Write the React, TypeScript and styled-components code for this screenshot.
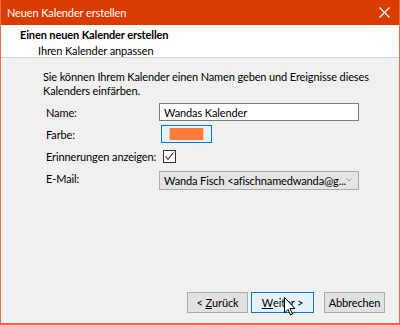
import React from 'react';
import styled, { createGlobalStyle } from 'styled-components';

const GlobalStyle = createGlobalStyle`
  html, body {
    margin: 0;
    padding: 0;
    background: #ffffff;
  }
  body {
    font-family: Lato, "Liberation Sans", sans-serif;
    font-size: 11px;
    letter-spacing: -0.12px;
    color: #000000;
    white-space: nowrap;
  }
`;

const Window = styled.div`
  width: 400px;
  height: 325px;
  box-sizing: border-box;
  display: flex;
  flex-direction: column;
  border: 1px solid #e0714a;
  border-top: none;
  border-bottom-width: 2px;
  background: #f0f0f0;
  overflow: hidden;
`;

const TitleBar = styled.div`
  height: 25px;
  flex: none;
  display: flex;
  align-items: center;
  justify-content: space-between;
  background: #da3b01;
  color: #ffffff;
  padding: 0 8px 0 7px;
  margin: 0 -1px;
`;

const CloseIcon = styled.svg`
  width: 11px;
  height: 11px;
  margin-right: 2px;
`;

const Header = styled.div`
  flex: none;
  height: 33px;
  box-sizing: border-box;
  background: #ffffff;
  padding: 2px 0 0 19px;
  border-bottom: 1px solid #d5d5d5;
`;

const HeaderTitle = styled.div`
  font-weight: 700;
  line-height: 16px;
`;

const HeaderSub = styled.div`
  padding-left: 18px;
  line-height: 15px;
`;

const Body = styled.div`
  flex: 1;
  display: flex;
  flex-direction: column;
  margin: 0 5px 0 4px;
  border-left: 1px solid #fbfbfb;
  border-right: 1px solid #fbfbfb;
  padding: 12px 8px 10px 37px;
`;

const Intro = styled.p`
  margin: 0 0 3px 0;
  line-height: 14px;
`;

const Form = styled.div`
  display: grid;
  grid-template-columns: 113px 200px;
  grid-auto-rows: 22px;
  align-items: center;
  padding-left: 3px;
`;

const Label = styled.div`
  line-height: 15px;
`;

const TextInput = styled.div`
  width: 200px;
  height: 18px;
  box-sizing: border-box;
  border: 1px solid #7a7a7a;
  background: #ffffff;
  padding: 0 4px;
  display: flex;
  align-items: center;
`;

const ColorButton = styled.div`
  width: 51px;
  height: 18px;
  margin-left: 2px;
  box-sizing: border-box;
  border: 1px solid #0078d7;
  background: #e5f1fb;
  padding: 2px 7px 2px 7px;
  display: flex;
`;

const Swatch = styled.div<{ $color: string }>`
  flex: 1;
  background: ${p => p.$color};
  border-left: 1px solid #f6c3a8;
  border-right: 1px solid #f6c3a8;
`;

const CheckBox = styled.div`
  width: 13px;
  height: 13px;
  margin-left: 4px;
  box-sizing: border-box;
  border: 1px solid #333333;
  background: #ffffff;
  display: flex;
  align-items: center;
  justify-content: center;
`;

const Select = styled.div`
  width: 200px;
  height: 19px;
  margin-top: 4px;
  box-sizing: border-box;
  border: 1px solid #adadad;
  background: #e5e5e5;
  padding: 0 6px 0 4px;
  display: flex;
  align-items: center;
  justify-content: space-between;
  overflow: hidden;
`;

const Spacer = styled.div`
  flex: 1;
`;

const ButtonRow = styled.div`
  display: flex;
  justify-content: flex-end;
  gap: 3px;
`;

const Button = styled.div<{ $focused?: boolean; $gapLeft?: number }>`
  position: relative;
  width: ${p => (p.$focused ? 63 : 61)}px;
  height: 21px;
  box-sizing: border-box;
  margin-left: ${p => p.$gapLeft ?? 0}px;
  border: 1px solid ${p => (p.$focused ? '#0078d7' : '#adadad')};
  background: ${p => (p.$focused ? '#e5f1fb' : '#e1e1e1')};
  display: flex;
  align-items: center;
  justify-content: center;
  line-height: 15px;
`;

const U = styled.span`
  text-decoration: underline;
`;

const Cursor = styled.svg`
  position: absolute;
  left: 32px;
  top: 4px;
  width: 12px;
  height: 19px;
`;

export default function App() {
  return (
    <>
      <GlobalStyle />
      <Window>
        <TitleBar>
          <span>Neuen Kalender erstellen</span>
          <CloseIcon viewBox="0 0 11 11">
            <path d="M0.5 0.5 L10.5 10.5 M10.5 0.5 L0.5 10.5" stroke="#ffffff" strokeWidth="1.1" />
          </CloseIcon>
        </TitleBar>
        <Header>
          <HeaderTitle>Einen neuen Kalender erstellen</HeaderTitle>
          <HeaderSub>Ihren Kalender anpassen</HeaderSub>
        </Header>
        <Body>
          <Intro>
            Sie können Ihrem Kalender einen Namen geben und Ereignisse dieses
            <br />
            Kalenders einfärben.
          </Intro>
          <Form>
            <Label>Name:</Label>
            <TextInput>Wandas Kalender</TextInput>
            <Label>Farbe:</Label>
            <ColorButton>
              <Swatch $color="#fe7b3d" />
            </ColorButton>
            <Label>Erinnerungen anzeigen:</Label>
            <CheckBox>
              <svg width="11" height="11" viewBox="0 0 11 11">
                <path d="M1.5 5.5 L4 8.5 L9.5 1.5" stroke="#222222" strokeWidth="1.1" fill="none" />
              </svg>
            </CheckBox>
            <Label>E-Mail:</Label>
            <Select>
              <span>Wanda Fisch &lt;afischnamedwanda@g...</span>
              <svg width="9" height="6" viewBox="0 0 9 6">
                <path d="M0.5 0.5 L4.5 4.5 L8.5 0.5" stroke="#707070" strokeWidth="1" fill="none" />
              </svg>
            </Select>
          </Form>
          <Spacer />
          <ButtonRow>
            <Button>
              &lt;&nbsp;<U>Z</U>urück
            </Button>
            <Button $focused>
              <U>W</U>eiter &gt;
              <Cursor viewBox="0 0 12 19">
                <path
                  d="M0.5 0.5 L0.5 16 L4 12.5 L6.5 18 L8.5 17 L6 11.5 L11 11.5 Z"
                  fill="#ffffff"
                  stroke="#000000"
                  strokeWidth="1"
                  strokeLinejoin="round"
                />
              </Cursor>
            </Button>
            <Button $gapLeft={7}>Abbrechen</Button>
          </ButtonRow>
        </Body>
      </Window>
    </>
  );
}
